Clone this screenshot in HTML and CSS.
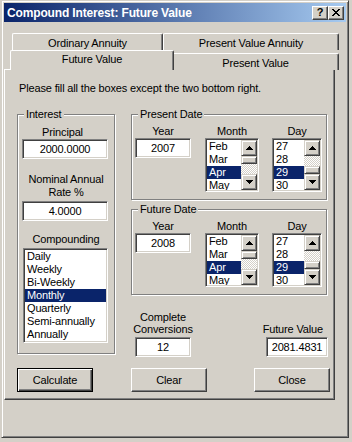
FILE: index.html
```html
<!DOCTYPE html>
<html lang="en">
<head>
  <meta charset="UTF-8" />
  <title>Compound Interest: Future Value</title>
  <link rel="stylesheet" href="styles.css">
</head>
<body>
  <div class="window">
    <div class="titlebar">
      <span class="caption">Compound Interest: Future Value</span>
      <span class="cap-btn">?</span>
      <span class="cap-btn">
        <svg width="8" height="7" viewBox="0 0 8 7" shape-rendering="crispEdges"><path d="M0 0h2v1H0zM6 0h2v1H6zM1 1h2v1H1zM5 1h2v1H5zM2 2h4v1H2zM3 3h2v1H3zM2 4h4v1H2zM1 5h2v1H1zM5 5h2v1H5zM0 6h2v1H0zM6 6h2v1H6z"/></svg>
      </span>
    </div>

    <div class="tabs">
      <div class="tab-row back">
        <div class="tab tab-oa">Ordinary Annuity</div>
        <div class="tab tab-pva">Present Value Annuity</div>
      </div>
      <div class="tab-row front">
        <div class="tab tab-fv active">Future Value</div>
        <div class="tab tab-pv">Present Value</div>
      </div>
    </div>

    <div class="panel">
      <p class="intro">Please fill all the boxes except the two bottom right.</p>

      <div class="main">
        <div class="group interest">
          <div class="legend">Interest</div>
          <div class="lbl lbl-principal">Principal</div>
          <input class="field wide" type="text" value="2000.0000">
          <div class="lbl lbl-rate">Nominal Annual<br>Rate %</div>
          <input class="field wide" type="text" value="4.0000">
          <div class="lbl lbl-comp">Compounding</div>
          <div class="listbox compounding">
            <div class="opts">
              <div class="opt">Daily</div>
              <div class="opt">Weekly</div>
              <div class="opt">Bi-Weekly</div>
              <div class="opt sel">Monthly</div>
              <div class="opt">Quarterly</div>
              <div class="opt">Semi-annually</div>
              <div class="opt">Annually</div>
            </div>
          </div>
        </div>

        <div class="right-col">
          <div class="group date">
            <div class="legend">Present Date</div>
            <div class="date-fields">
              <div class="col col-year">
                <div class="lbl">Year</div>
                <input class="field year" type="text" value="2007">
              </div>
              <div class="col col-month">
                <div class="lbl">Month</div>
                <div class="listbox month">
                  <div class="opts">
                    <div class="opt">Feb</div>
                    <div class="opt">Mar</div>
                    <div class="opt sel">Apr</div>
                    <div class="opt">May</div>
                  </div>
                  <div class="scrollbar">
                    <span class="sb-btn"><svg width="7" height="4" viewBox="0 0 7 4" shape-rendering="crispEdges"><path d="M3 0h1v1H3zM2 1h3v1H2zM1 2h5v1H1zM0 3h7v1H0z"/></svg></span>
                    <span class="sb-track"><span class="sb-thumb"></span></span>
                    <span class="sb-btn"><svg width="7" height="4" viewBox="0 0 7 4" shape-rendering="crispEdges"><path d="M0 0h7v1H0zM1 1h5v1H1zM2 2h3v1H2zM3 3h1v1H3z"/></svg></span>
                  </div>
                </div>
              </div>
              <div class="col col-day">
                <div class="lbl">Day</div>
                <div class="listbox day">
                  <div class="opts">
                    <div class="opt">27</div>
                    <div class="opt">28</div>
                    <div class="opt sel">29</div>
                    <div class="opt">30</div>
                  </div>
                  <div class="scrollbar">
                    <span class="sb-btn"><svg width="7" height="4" viewBox="0 0 7 4" shape-rendering="crispEdges"><path d="M3 0h1v1H3zM2 1h3v1H2zM1 2h5v1H1zM0 3h7v1H0z"/></svg></span>
                    <span class="sb-track end"><span class="sb-thumb"></span></span>
                    <span class="sb-btn"><svg width="7" height="4" viewBox="0 0 7 4" shape-rendering="crispEdges"><path d="M0 0h7v1H0zM1 1h5v1H1zM2 2h3v1H2zM3 3h1v1H3z"/></svg></span>
                  </div>
                </div>
              </div>
            </div>
          </div>

          <div class="group date future">
            <div class="legend">Future Date</div>
            <div class="date-fields">
              <div class="col col-year">
                <div class="lbl">Year</div>
                <input class="field year" type="text" value="2008">
              </div>
              <div class="col col-month">
                <div class="lbl">Month</div>
                <div class="listbox month">
                  <div class="opts">
                    <div class="opt">Feb</div>
                    <div class="opt">Mar</div>
                    <div class="opt sel">Apr</div>
                    <div class="opt">May</div>
                  </div>
                  <div class="scrollbar">
                    <span class="sb-btn"><svg width="7" height="4" viewBox="0 0 7 4" shape-rendering="crispEdges"><path d="M3 0h1v1H3zM2 1h3v1H2zM1 2h5v1H1zM0 3h7v1H0z"/></svg></span>
                    <span class="sb-track"><span class="sb-thumb"></span></span>
                    <span class="sb-btn"><svg width="7" height="4" viewBox="0 0 7 4" shape-rendering="crispEdges"><path d="M0 0h7v1H0zM1 1h5v1H1zM2 2h3v1H2zM3 3h1v1H3z"/></svg></span>
                  </div>
                </div>
              </div>
              <div class="col col-day">
                <div class="lbl">Day</div>
                <div class="listbox day">
                  <div class="opts">
                    <div class="opt">27</div>
                    <div class="opt">28</div>
                    <div class="opt sel">29</div>
                    <div class="opt">30</div>
                  </div>
                  <div class="scrollbar">
                    <span class="sb-btn"><svg width="7" height="4" viewBox="0 0 7 4" shape-rendering="crispEdges"><path d="M3 0h1v1H3zM2 1h3v1H2zM1 2h5v1H1zM0 3h7v1H0z"/></svg></span>
                    <span class="sb-track end"><span class="sb-thumb"></span></span>
                    <span class="sb-btn"><svg width="7" height="4" viewBox="0 0 7 4" shape-rendering="crispEdges"><path d="M0 0h7v1H0zM1 1h5v1H1zM2 2h3v1H2zM3 3h1v1H3z"/></svg></span>
                  </div>
                </div>
              </div>
            </div>
          </div>

          <div class="results">
            <div class="conv">
              <div class="lbl">Complete<br>Conversions</div>
              <input class="field year" type="text" value="12">
            </div>
            <div class="fv">
              <div class="lbl">Future Value</div>
              <input class="field fv-box" type="text" value="2081.4831">
            </div>
          </div>
        </div>
      </div>

      <div class="buttons">
        <button class="btn default">Calculate</button>
        <button class="btn clear">Clear</button>
        <button class="btn close">Close</button>
      </div>
    </div>
  </div>
</body>
</html>
```

FILE: styles.css
```css
* {
  margin: 0;
  padding: 0;
  box-sizing: border-box;
}

body {
  width: 352px;
  height: 442px;
  overflow: hidden;
  background: #d4d0c8;
  color: #000;
  font-family: "Liberation Sans", Arial, sans-serif;
  font-size: 11px;
  letter-spacing: -0.15px;
  line-height: 13px;
}

/* window frame */
.window {
  margin-left: 1px;
  width: 348px;
  height: 438px;
  padding: 2px;
  border: 1px solid;
  border-color: #d4d0c8 #404040 #404040 #d4d0c8;
  box-shadow: inset 1px 1px #fff, inset -1px -1px #808080;
}

.titlebar {
  height: 19px;
  display: flex;
  align-items: center;
  padding: 1px 2px 0 3px;
  background: linear-gradient(to right, #0a246a, #a6caf0);
  color: #fff;
  font-weight: bold;
  font-size: 12px;
  letter-spacing: -0.15px;
}
.titlebar .caption { flex: 1; }

.cap-btn {
  width: 16px;
  height: 14px;
  margin-top: -1px;
  display: flex;
  align-items: center;
  justify-content: center;
  background: #d4d0c8;
  color: #000;
  font-size: 11px;
  letter-spacing: 0;
  border: 1px solid;
  border-color: #fff #404040 #404040 #fff;
  box-shadow: inset -1px -1px #808080;
}

/* tabs */
.tabs {
  margin: 11px 0 0 6px;
  width: 331px;
}
.tab-row {
  display: flex;
  padding-left: 2px;
}
.tab-row.back { height: 17px; }
.tab-row.front {
  height: 20px;
  align-items: flex-end;
  margin-bottom: -1px;
  position: relative;
  z-index: 1;
}
.tab {
  height: 17px;
  padding-top: 3px;
  text-align: center;
  background: #d4d0c8;
  border: 1px solid;
  border-bottom: 0;
  border-color: #fff #404040 #fff #fff;
  border-radius: 2px 2px 0 0;
  box-shadow: inset -1px 0 #808080;
}
.tab.active {
  height: 20px;
  padding-top: 2px;
  margin: 0 -2px;
  position: relative;
  z-index: 1;
}
.tab-oa { width: 151px; }
.tab-pva { width: 176px; }
.tab-fv { width: 164px; }
.tab-pv { width: 167px; }

/* panel */
.panel {
  width: 331px;
  height: 331px;
  padding: 12px 0 0 12px;
  border: 1px solid;
  border-color: #fff #404040 #404040 #fff;
  box-shadow: inset -1px -1px #808080;
}
.intro { margin-left: 2px; }

.main {
  display: flex;
  margin-top: 19px;
}

.group {
  display: flex;
  flex-direction: column;
  border: 1px solid #808080;
  box-shadow: inset 1px 1px #fff, 1px 1px #fff;
}
.legend {
  align-self: flex-start;
  margin: -7px 0 0 6px;
  padding: 0 2px;
  background: #d4d0c8;
}
.lbl {
  text-align: center;
  white-space: nowrap;
}

.interest {
  width: 98px;
  height: 240px;
}
.interest .lbl { align-self: stretch; }
.lbl-principal { margin: 5px 7px 0 0; }
.lbl-rate { margin-top: 14px; }
.lbl-comp { margin-top: 12px; }

/* sunken edit box */
.field {
  height: 20px;
  border: 1px solid;
  border-color: #808080 #fff #fff #808080;
  box-shadow: inset 1px 1px #404040, inset -1px -1px #d4d0c8;
  background: #fff;
  font: inherit;
  letter-spacing: inherit;
  color: #000;
  text-align: center;
  outline: none;
}
.field.wide {
  width: 86px;
  margin-left: 4px;
}
.interest .lbl-rate + .field { margin-top: 2px; }
.field.year { width: 56px; }
.field.fv-box { width: 62px; }

.listbox {
  display: flex;
  background: #fff;
  border: 1px solid;
  border-color: #808080 #fff #fff #808080;
  box-shadow: inset 1px 1px #404040, inset -1px -1px #d4d0c8;
  padding: 1px;
  overflow: hidden;
}
.opts {
  flex: 1;
  overflow: hidden;
}
.opt {
  height: 13px;
  padding-left: 2px;
  white-space: nowrap;
}
.opt.sel {
  background: #0a246a;
  color: #fff;
}
.compounding {
  width: 85px;
  height: 95px;
  margin: 2px 0 0 5px;
}

/* right column */
.right-col {
  width: 197px;
  margin-left: 16px;
}
.date {
  width: 196px;
  height: 86px;
}
.date.future { margin-top: 9px; }
.date-fields {
  display: flex;
  padding-left: 3px;
  margin-top: 4px;
}
.col {
  display: flex;
  flex-direction: column;
  align-items: center;
}
.col-month { margin-left: 14px; }
.col-day { margin-left: 13px; }
.month { width: 54px; height: 54px; }
.day { width: 50px; height: 54px; }

.scrollbar {
  width: 16px;
  display: flex;
  flex-direction: column;
}
.sb-btn {
  height: 16px;
  display: flex;
  align-items: center;
  justify-content: center;
  background: #d4d0c8;
  border: 1px solid;
  border-color: #d4d0c8 #404040 #404040 #d4d0c8;
  box-shadow: inset 1px 1px #fff, inset -1px -1px #808080;
}
.sb-track {
  flex: 1;
  display: flex;
  flex-direction: column;
  background: repeating-conic-gradient(#fff 0 25%, #d4d0c8 0 50%) 0 0 / 2px 2px;
}
.sb-track.end { justify-content: flex-end; }
.sb-thumb {
  height: 8px;
  background: #d4d0c8;
  border: 1px solid;
  border-color: #d4d0c8 #404040 #404040 #d4d0c8;
  box-shadow: inset 1px 1px #fff, inset -1px -1px #808080;
}

.results {
  display: flex;
  align-items: flex-end;
  margin-top: 16px;
}
.results .lbl { line-height: 12px; }
.results .field { margin-top: 2px; }
.conv {
  width: 56px;
  margin-left: 4px;
  display: flex;
  flex-direction: column;
  align-items: center;
}
.fv {
  margin-left: auto;
  display: flex;
  flex-direction: column;
  align-items: flex-end;
}
.fv .lbl { margin-right: 5px; }

/* push buttons */
.buttons {
  display: flex;
  margin-top: 11px;
}
.btn {
  width: 76px;
  height: 24px;
  background: #d4d0c8;
  color: #000;
  font: inherit;
  letter-spacing: inherit;
  border: 1px solid;
  border-color: #fff #404040 #404040 #fff;
  box-shadow: inset -1px -1px #808080;
}
.btn.default {
  border-color: #000;
  box-shadow: inset 1px 1px #fff, inset -1px -1px #404040, inset -2px -2px #808080;
}
.btn.clear { margin-left: 38px; }
.btn.close { margin-left: 47px; }
```
